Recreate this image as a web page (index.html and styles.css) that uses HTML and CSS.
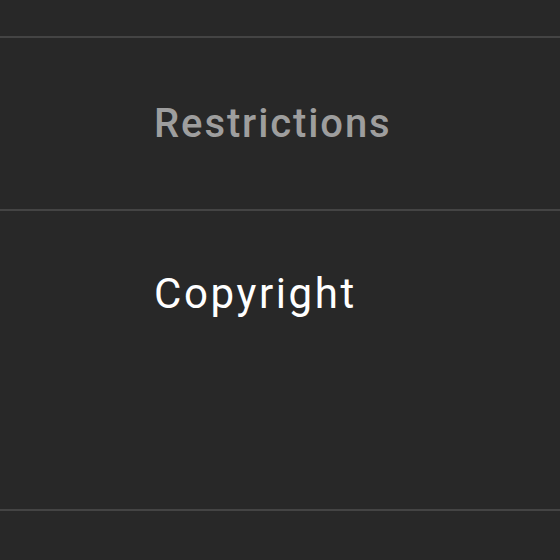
FILE: index.html
```html
<!DOCTYPE html>
<html>
<head>
<meta charset="utf-8">
<link rel="stylesheet" href="styles.css">
</head>
<body>
<div class="page">
  <div class="top-space"></div>
  <div class="divider"></div>
  <div class="header-row"><span class="header">Restrictions</span></div>
  <div class="divider"></div>
  <div class="body-row"><span class="value">Copyright</span></div>
  <div class="divider"></div>
</div>
</body>
</html>
```
FILE: styles.css
```css
html, body {
  margin: 0;
  padding: 0;
  background: #282828;
  height: 100%;
  overflow: hidden;
}
.page {
  font-family: Roboto, "Liberation Sans", sans-serif;
}
.top-space {
  height: 36px;
}
.divider {
  height: 2px;
  background: #444444;
}
.header-row {
  height: 171px;
  box-sizing: border-box;
  padding-left: 154px;
  padding-top: 61px;
}
.header {
  display: block;
  font-size: 40px;
  line-height: 50px;
  font-weight: 500;
  letter-spacing: 1.9px;
  color: #9e9e9e;
}
.body-row {
  height: 298px;
  box-sizing: border-box;
  padding-left: 154px;
  padding-top: 55px;
}
.value {
  display: block;
  font-size: 42px;
  line-height: 56px;
  font-weight: 400;
  letter-spacing: 2.6px;
  color: #ffffff;
}
```
